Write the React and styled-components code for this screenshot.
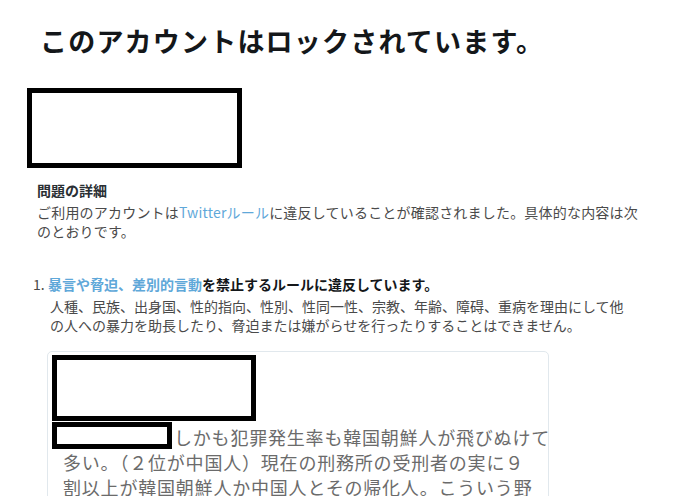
import styled, { createGlobalStyle } from "styled-components";

const Global = createGlobalStyle`
  body {
    margin: 0;
    background: #fff;
    font-family: "Noto Sans CJK JP", "Noto Sans", sans-serif;
    color: #14171a;
  }
`

const Page = styled.div`
  padding: 0 0 0 27px;
  width: 685px;
  height: 496px;
  box-sizing: border-box;
  overflow: hidden;
`

const Title = styled.h1`
  margin: 25px 0 0 13px;
  font-size: 27px;
  line-height: 32px;
  font-weight: 700;
  letter-spacing: 1.2px;
  color: #14171a;
`

const Redact = styled.div`
  box-sizing: border-box;
  width: ${p => p.$w}px;
  height: ${p => p.$h}px;
  border: 5px solid #000;
  background: #fff;
  margin-top: ${p => p.$top || 0}px;
`

const Details = styled.section`
  padding-left: 10px;
  margin-top: 12px;
`

const Label = styled.h2`
  margin: 0;
  font-size: 14px;
  line-height: 20px;
  font-weight: 700;
  color: #292f33;
`

const Body = styled.p`
  margin: 3px 0 0;
  font-size: 14px;
  line-height: 19px;
  letter-spacing: 0.2px;
  color: #4a4a4a;
  white-space: nowrap;
`

const Link = styled.a`
  color: #5fa8d9;
  text-decoration: none;
`

const List = styled.ol`
  margin: 33px 0 0 -4px;
  padding: 0;
  list-style: none;
`

const Item = styled.li`
  display: grid;
  grid-template-columns: 15px 1fr;
`

const Num = styled.span`
  font-size: 14px;
  line-height: 20px;
  color: #4a4a4a;
`

const ItemHead = styled.div`
  font-size: 14px;
  line-height: 20px;
  font-weight: 700;
  color: #14171a;
`

const ItemBody = styled.p`
  margin: 3px 0 0 2px;
  font-size: 14px;
  line-height: 19px;
  color: #4a4a4a;
  white-space: nowrap;
`

const Card = styled.div`
  margin: 16px 0 0 -1px;
  width: 502px;
  box-sizing: border-box;
  border: 1px solid #e1e8ed;
  border-radius: 5px;
  padding: 3px 4px 20px;
  background: #fff;
`

const Quote = styled.div`
  margin-top: 4px;
  padding-left: 11px;
  font-size: 18px;
  line-height: 25px;
  color: #6b6b6b;
  letter-spacing: 0.8px;
  white-space: nowrap;
`

const InlineRedact = styled.span`
  display: inline-block;
  box-sizing: border-box;
  vertical-align: top;
  width: 120px;
  height: 27px;
  margin: -3px 2px 0 -11px;
  border: 5px solid #000;
  background: #fff;
`

export default function App() {
  return (
    <Page>
      <Global />
      <Title>このアカウントはロックされています。</Title>
      <Redact $w={215} $h={80} $top={31} />
      <Details>
        <Label>問題の詳細</Label>
        <Body>
          ご利用のアカウントは<Link>Twitterルール</Link>に違反していることが確認されました。具体的な内容は次
          <br />
          のとおりです。
        </Body>
        <List>
          <Item>
            <Num>1.</Num>
            <div>
              <ItemHead>
                <Link>暴言や脅迫、差別的言動</Link>を禁止するルールに違反しています。
              </ItemHead>
              <ItemBody>
                人種、民族、出身国、性的指向、性別、性同一性、宗教、年齢、障碍、重病を理由にして他
                <br />
                の人への暴力を助長したり、脅迫または嫌がらせを行ったりすることはできません。
              </ItemBody>
              <Card>
                <Redact $w={204} $h={66} />
                <Quote>
                  <InlineRedact />しかも犯罪発生率も韓国朝鮮人が飛びぬけて
                  <br />
                  多い。（２位が中国人）現在の刑務所の受刑者の実に９
                  <br />
                  割以上が韓国朝鮮人か中国人とその帰化人。こういう野
                </Quote>
              </Card>
            </div>
          </Item>
        </List>
      </Details>
    </Page>
  );
}
